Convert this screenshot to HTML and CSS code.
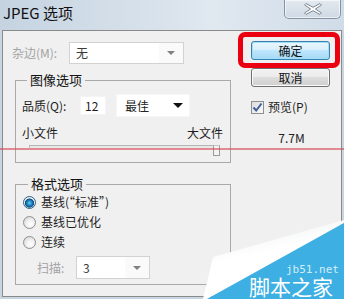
FILE: index.html
```html
<!DOCTYPE html>
<html lang="zh-CN">
<head>
<meta charset="utf-8">
<title>JPEG 选项</title>
<link rel="stylesheet" href="styles.css">
</head>
<body>
<div class="window">
  <div class="titlebar">
    <span class="title">JPEG 选项</span>
    <div class="close">
      <svg width="20" height="14" viewBox="0 0 20 14"><path d="M3 1.5 L10 5.3 L17 1.5 L18.5 3 L12.4 7 L18.5 11 L17 12.5 L10 8.7 L3 12.5 L1.5 11 L7.6 7 L1.5 3 Z" fill="#fdfdfd" stroke="#7c8794" stroke-width="1" stroke-linejoin="round"/></svg>
    </div>
  </div>
  <div class="client">
    <div class="left">
      <div class="matte-row">
        <span class="lbl lbl-matte disabled">杂边(M):</span>
        <div class="select sel-matte dis"><span class="val">无</span><span class="drop"><span class="arrow grey"></span></span></div>
      </div>
      <fieldset class="group g-image">
        <legend>图像选项</legend>
        <div class="quality-row">
          <span class="lbl lbl-q">品质(Q):</span>
          <div class="input">12</div>
          <div class="select sel-quality"><span class="val">最佳</span><span class="arrow black"></span></div>
        </div>
        <div class="size-row"><span>小文件</span><span>大文件</span></div>
        <div class="slider"><div class="track"></div><div class="thumb"></div></div>
      </fieldset>
      <fieldset class="group g-format">
        <legend>格式选项</legend>
        <div class="radio-row"><span class="radio on"></span><span>基线(“标准”)</span></div>
        <div class="radio-row"><span class="radio"></span><span>基线已优化</span></div>
        <div class="radio-row"><span class="radio"></span><span>连续</span></div>
        <div class="scan-row">
          <span class="lbl lbl-scan disabled">扫描:</span>
          <div class="select sel-scan dis"><span class="val">3</span><span class="drop"><span class="arrow grey"></span></span></div>
        </div>
      </fieldset>
    </div>
    <div class="right">
      <div class="btn-wrap">
        <div class="btn primary">确定</div>
        <div class="highlight"></div>
      </div>
      <div class="btn cancel">取消</div>
      <div class="check-row">
        <span class="checkbox"><svg width="11" height="11" viewBox="0 0 11 11"><path d="M1.5 5.5 L4.2 8.5 L9.5 1.5" fill="none" stroke="#3f5d96" stroke-width="2"/></svg></span>
        <span>预览(P)</span>
      </div>
      <div class="filesize">7.7M</div>
    </div>
  </div>
</div>
<div class="redline"></div>
<svg class="watermark" width="144" height="81" viewBox="0 0 144 81">
  <defs>
    <linearGradient id="wg" x1="0" y1="0" x2="0.4" y2="1">
      <stop offset="0" stop-color="#e6e9ec"/>
      <stop offset="0.5" stop-color="#ffffff"/>
      <stop offset="1" stop-color="#ffffff"/>
    </linearGradient>
  </defs>
  <polygon points="13,39 144,2 144,5 7,81 3,81" fill="url(#wg)"/>
  <polygon points="144,5 144,81 7,81" fill="#3eafe2"/>
  <text x="86" y="55" class="wm-url">jb51.net</text>
  <text x="49" y="77" class="wm-name">脚本之家</text>
</svg>
</body>
</html>
```
FILE: styles.css
```css
* { box-sizing: border-box; }
html, body { margin: 0; padding: 0; }
body {
  width: 344px;
  height: 299px;
  overflow: hidden;
  position: relative;
  background: #c8d6e4;
  font-family: "Noto Sans CJK SC", "Microsoft YaHei", sans-serif;
  font-size: 12px;
  color: #1e1e1e;
}
.window { width: 344px; height: 299px; display: flex; flex-direction: column; }
.titlebar {
  height: 30px;
  flex: none;
  display: flex;
  align-items: flex-start;
  background: linear-gradient(90deg, #c5d3e1 0%, #d6e0ea 40%, #e0e8f0 62%, #d0dce8 100%);
}
.title { font-size: 15px; line-height: 18px; margin: 4px 0 0 3px; color: #111; }
.close {
  margin-left: auto;
  margin-right: 3px;
  width: 57px;
  height: 19px;
  border: 1px solid #8593a3;
  border-top: none;
  border-radius: 0 0 5px 5px;
  background: linear-gradient(#e3e9f0, #cfd9e4);
  box-shadow: inset 0 0 0 1px rgba(255,255,255,0.6);
  display: flex;
  align-items: center;
  justify-content: center;
}
.close svg { display: block; margin-top: -1px; }
.client {
  margin-left: 2px;
  width: 340px;
  height: 267px;
  border: 1px solid #8a8a8a;
  background: #f0f0f0;
  display: flex;
}
.left { width: 228px; flex: none; }
.lbl { line-height: 16px; white-space: nowrap; }
.disabled { color: #a3a3a3; }
.matte-row { display: flex; align-items: center; margin-top: 11px; padding-left: 9px; height: 22px; }
.lbl-matte { width: 57px; }
.select {
  display: flex;
  align-items: center;
  background: #fff;
  border: 1px solid #d2d2d2;
  height: 23px;
}
.select .val { flex: 1; padding-left: 6px; line-height: 16px; color: #222; }
.select.dis .val { color: #3a3a3a; }
.drop {
  width: 24px;
  height: 100%;
  display: flex;
  align-items: center;
  justify-content: center;
  background: #fafafa;
}
.arrow { width: 0; height: 0; border-left: 4px solid transparent; border-right: 4px solid transparent; }
.arrow.grey { border-top: 4px solid #808080; }
.arrow.black { border-left-width: 5px; border-right-width: 5px; border-top: 5px solid #111; margin-right: 6px; }
.sel-matte { width: 115px; height: 22px; }
.group {
  margin: 8px 0 0 12px;
  width: 216px;
  min-width: 0;
  border: 1px solid #a9a9a9;
  padding: 0 7px 5px 6px;
}
.group legend {
  font-size: 13px;
  line-height: 16px;
  padding: 0 3px;
  margin-left: 5px;
  color: #111;
}
.quality-row { display: flex; align-items: center; margin-top: 6px; height: 23px; }
.lbl-q { width: 58px; }
.input {
  width: 26px;
  height: 19px;
  background: #fff;
  border: 1px solid #f4f4f4;
  padding-left: 4px;
  line-height: 17px;
}
.sel-quality { width: 74px; margin-left: 10px; border-color: #f6f6f6; }
.sel-quality .val { padding-left: 8px; }
.size-row { display: flex; justify-content: space-between; margin-top: 8px; line-height: 16px; }
.slider { position: relative; margin-top: 2px; height: 12px; }
.track {
  margin: 4px 0 0 7px;
  width: 188px;
  height: 3px;
  border: 1px solid #b4b4b4;
  border-bottom-color: #e6e6e6;
  background: #e7eaea;
}
.thumb {
  position: absolute;
  left: 191px;
  top: 0;
  width: 7px;
  height: 11px;
  border: 1px solid #9a9a9a;
  border-top-color: #c8c8c8;
  background: #f3f3f3;
  border-radius: 0 0 1px 1px;
}
.g-format { margin-top: 13px; padding-left: 7px; padding-bottom: 5px; }
.radio-row { display: flex; align-items: center; height: 20px; gap: 5px; line-height: 16px; }
.radio {
  width: 13px;
  height: 13px;
  border-radius: 50%;
  border: 1px solid #8e8f8f;
  background: radial-gradient(circle at 60% 65%, #ffffff 0%, #f1f1f1 40%, #cfcfcf 100%);
  flex: none;
}
.radio.on {
  border-color: #2b5f88;
  background: radial-gradient(circle at 50% 55%, #62d0f6 0%, #1e86c2 30%, #0d4f80 52%, #f4f4f4 60%, #e4e4e4 100%);
}
.scan-row { display: flex; align-items: center; margin-top: 4px; padding-left: 14px; height: 23px; }
.lbl-scan { width: 39px; }
.sel-scan { width: 74px; }
.right { margin-left: 20px; width: 79px; padding-top: 10px; flex: none; }
.btn-wrap { position: relative; }
.btn {
  height: 19px;
  border: 1px solid #707070;
  border-radius: 3px;
  text-align: center;
  line-height: 17px;
  color: #111;
}
.primary {
  border-color: #3c7fb1;
  background: linear-gradient(#eaf6fd 0%, #d9f0fc 45%, #bee6fd 50%, #a7d9f5 100%);
  box-shadow: inset 0 0 0 1px #9ee1f7;
}
.cancel {
  margin-top: 8px;
  background: linear-gradient(#f2f2f2 0%, #ebebeb 45%, #dddddd 50%, #cfcfcf 100%);
  box-shadow: inset 0 0 0 1px #fbfbfb;
}
.highlight {
  position: absolute;
  left: -13px;
  top: -9px;
  width: 102px;
  height: 36px;
  border: 5px solid #ea0010;
  border-radius: 7px;
}
.check-row { display: flex; align-items: center; margin-top: 12px; height: 16px; gap: 4px; line-height: 16px; }
.checkbox {
  width: 13px;
  height: 13px;
  border: 1px solid #8e8f8f;
  background: linear-gradient(135deg, #dcdcdc, #fafafa);
  display: flex;
  align-items: center;
  justify-content: center;
  flex: none;
}
.checkbox svg { display: block; }
.filesize { margin-top: 15px; line-height: 16px; text-align: center; padding-left: 2px; color: #222; }
.redline {
  position: absolute;
  left: 0;
  top: 148px;
  width: 344px;
  height: 2px;
  background: rgba(214, 76, 88, 0.62);
}
.watermark { position: absolute; left: 200px; top: 218px; display: block; }
.wm-url { font-family: "DejaVu Sans Mono", monospace; font-size: 11px; fill: #d2eefb; }
.wm-name { font-family: "Noto Sans CJK SC", sans-serif; font-size: 21px; fill: #ffffff; }
```
